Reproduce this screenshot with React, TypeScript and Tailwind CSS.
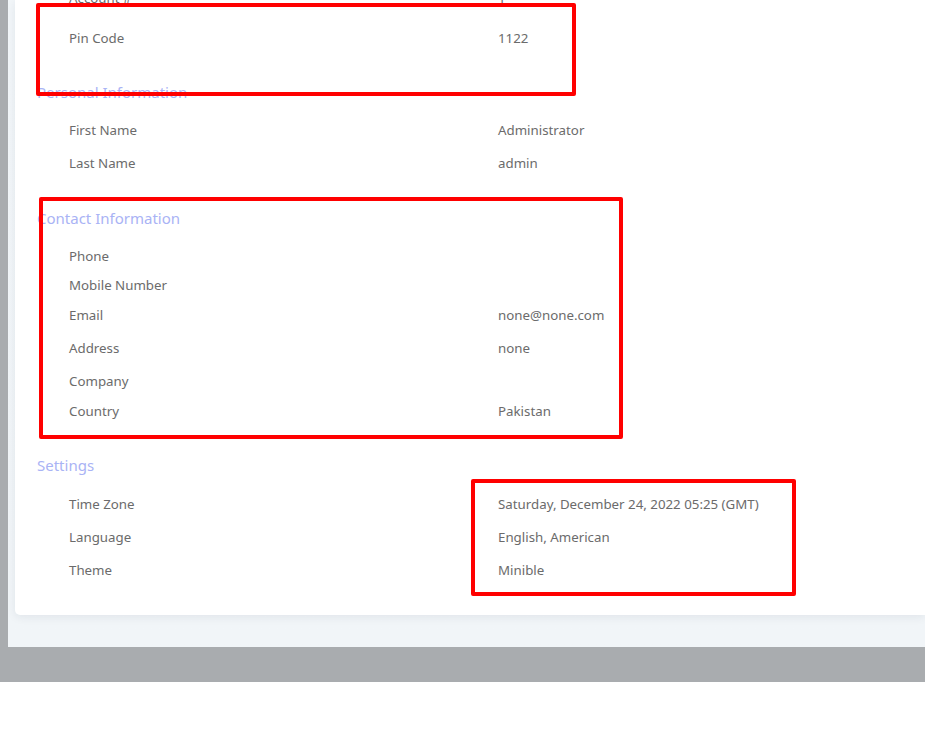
import React from "react";

function Row({ label, value, cls }: { label: string; value?: string; cls: string }) {
  return (
    <div className={`flex items-center ${cls}`}>
      <div className="w-[483px] shrink-0 pl-[54px]">{label}</div>
      <div>{value}</div>
    </div>
  );
}

function Heading({ text, cls }: { text: string; cls: string }) {
  return (
    <div className={`flex items-center h-[24px] pl-[22px] text-[15px] text-[#a9b3f5] ${cls}`}>{text}</div>
  );
}

export default function App() {
  return (
    <div className="relative w-[925px] h-[729px] bg-white overflow-hidden" style={{ fontFamily: '"Noto Sans", "Open Sans", sans-serif' }}>
      <div className="h-[682px] bg-[#a9acaf] pl-[8px] pb-[35px]">
        <div className="h-full bg-gradient-to-b from-[#f2f6f9] to-[#f1f5f8] pl-[7px] pb-[32px] flex flex-col overflow-hidden">
          <div className="flex-1 bg-white rounded-bl-[5px] shadow-[0_2px_10px_rgba(20,40,60,0.08)] text-[13.3px] text-[#6b6b6b] flex flex-col">
            <Row label="Account #" value="1" cls="mt-[-17px] h-[32px]" />
            <Row label="Pin Code" value="1122" cls="mt-[8px] h-[32px]" />
            <Heading text="Personal Information" cls="mt-[25px]" />
            <Row label="First Name" value="Administrator" cls="mt-[11px] h-[32px]" />
            <Row label="Last Name" value="admin" cls="mt-[1px] h-[32px]" />
            <Heading text="Contact Information" cls="mt-[26px]" />
            <Row label="Phone" cls="mt-[13px] h-[28px]" />
            <Row label="Mobile Number" cls="h-[30px]" />
            <Row label="Email" value="none@none.com" cls="h-[30px]" />
            <Row label="Address" value="none" cls="h-[36px]" />
            <Row label="Company" cls="h-[30px]" />
            <Row label="Country" value="Pakistan" cls="h-[30px]" />
            <Heading text="Settings" cls="mt-[26px]" />
            <Row label="Time Zone" value="Saturday, December 24, 2022 05:25 (GMT)" cls="mt-[12px] h-[32px]" />
            <Row label="Language" value="English, American" cls="mt-[1px] h-[32px]" />
            <Row label="Theme" value="Minible" cls="mt-[1px] h-[32px]" />
          </div>
        </div>
      </div>
      <div className="absolute left-[36px] top-[3px] w-[540px] h-[93px] border-[4px] border-[#ff0000] rounded-[2px]" />
      <div className="absolute left-[39px] top-[197px] w-[584px] h-[242px] border-[4px] border-[#ff0000] rounded-[2px]" />
      <div className="absolute left-[471px] top-[479px] w-[325px] h-[117px] border-[4px] border-[#ff0000] rounded-[2px]" />
    </div>
  );
}
